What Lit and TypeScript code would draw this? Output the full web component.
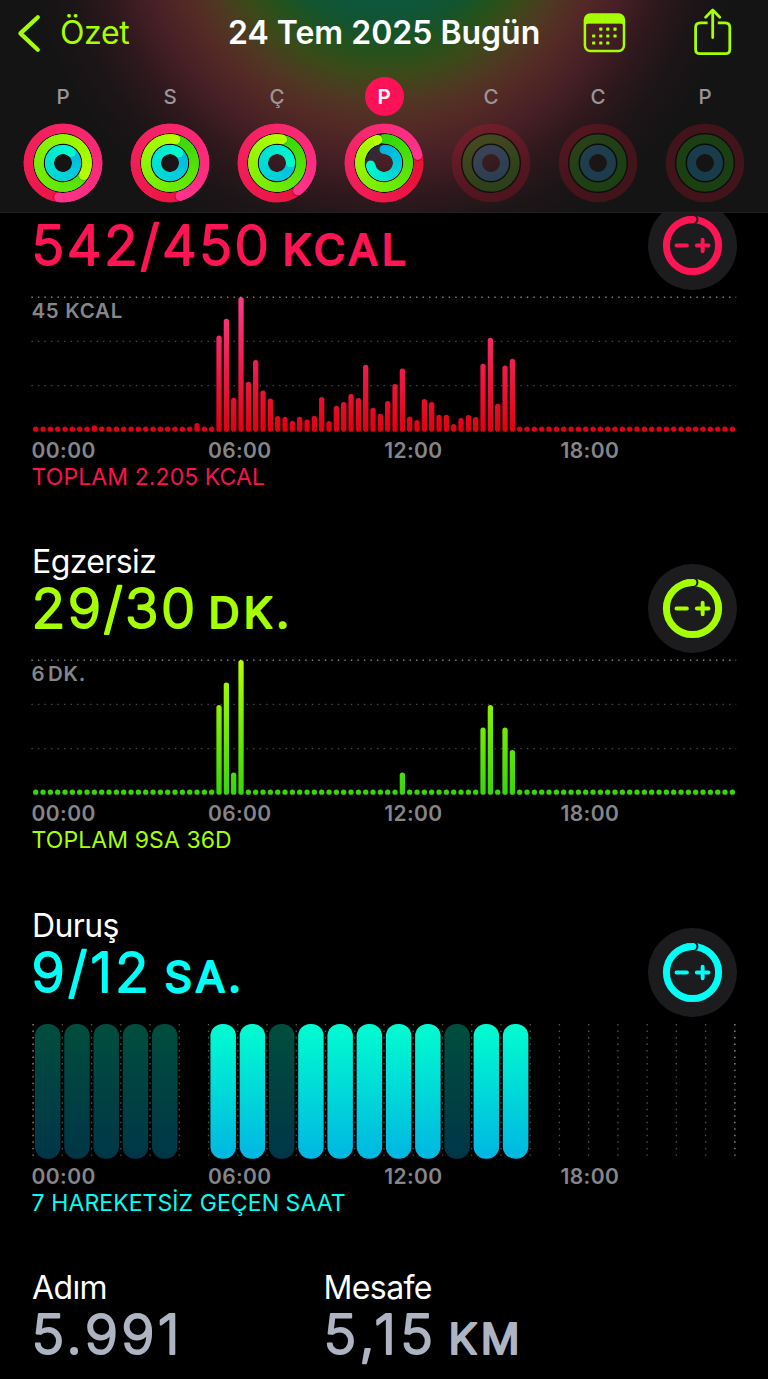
import { LitElement, html, svg, css } from "lit";
import { customElement, property } from "lit/decorators.js";

type RGB = [number, number, number];

const mix = (a: RGB, b: RGB, t: number) =>
  `rgb(${a.map((v, i) => Math.round(v + (b[i] - v) * t)).join(",")})`;

const polar = (r: number, deg: number): [number, number] => {
  const a = ((deg - 90) * Math.PI) / 180;
  return [40 + r * Math.cos(a), 40 + r * Math.sin(a)];
};

interface Day {
  letter: string;
  today?: boolean;
  rings?: [number, number, number];
}

const DAYS: Day[] = [
  { letter: "P", rings: [547, 481, 399] },
  { letter: "S", rings: [523, 374, 402] },
  { letter: "Ç", rings: [503, 373, 450] },
  { letter: "P", today: true, rings: [437, 345, 262] },
  { letter: "C" },
  { letter: "C" },
  { letter: "P" },
];

const RING_STYLE: { r: number; w: number; from: RGB; to: RGB; track: string }[] = [
  { r: 34.6, w: 9.4, from: [226, 8, 32], to: [255, 50, 140], track: "rgba(235,20,50,.21)" },
  { r: 24.1, w: 9.4, from: [48, 216, 10], to: [180, 255, 0], track: "rgba(60,215,20,.22)" },
  { r: 13.5, w: 9, from: [0, 178, 226], to: [0, 250, 205], track: "rgba(40,170,220,.27)" },
];

const MOVE: Record<number, number> = {
  8: 6.5, 22: 8.7, 25: 96.3, 26: 113, 27: 34, 28: 134.7, 29: 50, 30: 71.7, 31: 41.3,
  32: 33.3, 33: 15.7, 34: 15, 35: 11, 36: 15, 37: 12.3, 38: 16, 39: 34.7, 40: 10.7,
  41: 26, 42: 29.7, 43: 37.7, 44: 33.7, 45: 67, 46: 24, 47: 18, 48: 30.7, 49: 47.7,
  50: 63.3, 51: 15.3, 52: 11.7, 53: 32.7, 54: 29.7, 55: 17, 56: 17, 57: 7.7, 58: 13.7,
  59: 16.7, 60: 14.7, 61: 68, 62: 94, 63: 28, 64: 66.3, 65: 73,
};

const EXERCISE: Record<number, number> = {
  25: 89.7, 26: 112.3, 27: 22.3, 28: 134.7, 50: 22.3, 61: 67.3, 62: 89.7, 64: 67.3, 65: 44.7,
};

/* One character per hour: d = idle, b = stood, . = no data */
const STAND = "ddddd.bbdbbbbbdbb.......";

@customElement("activity-rings")
class ActivityRings extends LitElement {
  @property({ attribute: false }) rings?: [number, number, number];

  static styles = css`
    :host { display: block; width: 80px; height: 80px; }
    svg { display: block; }
  `;

  private arc(i: number, total: number) {
    const s = RING_STYLE[i];
    const start = Math.max(0, total - 360);
    const steps = 60;
    const span = total - start;
    const segs = [];
    for (let k = 0; k < steps; k++) {
      const a = start + (span * k) / steps;
      const b = start + (span * (k + 1)) / steps + (k < steps - 1 ? 7 : 0);
      const [x1, y1] = polar(s.r, a);
      const [x2, y2] = polar(s.r, b);
      segs.push(svg`<path d="M${x1} ${y1}A${s.r} ${s.r} 0 0 1 ${x2} ${y2}" fill="none"
        stroke=${mix(s.from, s.to, a / total)} stroke-width=${s.w}></path>`);
    }
    const [hx, hy] = polar(s.r, total);
    const [sx, sy] = polar(s.r, total + 2.5);
    const [ox, oy] = polar(s.r, 0);
    return svg`
      ${total < 360 ? svg`<circle cx=${ox} cy=${oy} r=${s.w / 2} fill=${mix(s.from, s.to, 0)}></circle>` : ""}
      ${segs.slice(0, 30)}
      <circle cx=${sx} cy=${sy} r=${s.w / 2 - 0.3} fill="rgba(0,0,0,.22)"></circle>
      ${segs.slice(30)}
      <circle cx=${hx} cy=${hy} r=${s.w / 2} fill=${mix(s.from, s.to, 1)}></circle>`;
  }

  render() {
    return html`<svg width="80" height="80" viewBox="0 0 80 80">
      <circle cx="40" cy="40" r="29.3" fill="none" stroke="rgba(5,10,10,.75)" stroke-width="1.6"></circle>
      <circle cx="40" cy="40" r="18.7" fill="none" stroke="rgba(5,10,10,.75)" stroke-width="1.6"></circle>
      ${RING_STYLE.map((s, i) =>
        this.rings
          ? svg`${this.rings[i] < 360
              ? svg`<circle cx="40" cy="40" r=${s.r} fill="none" stroke="rgb(52,42,54)" stroke-width=${s.w}></circle>`
              : ""}${this.arc(i, this.rings[i])}`
          : svg`<circle cx="40" cy="40" r=${s.r} fill="none" stroke=${s.track} stroke-width=${s.w}></circle>`
      )}
    </svg>`;
  }
}

@customElement("goal-button")
class GoalButton extends LitElement {
  @property() color = "#fff";

  static styles = css`
    :host { display: block; width: 89px; height: 89px; border-radius: 50%; background: #1c1c1e; }
    svg { display: block; }
  `;

  render() {
    const c = this.color;
    return html`<svg width="89" height="89" viewBox="-44.5 -44.5 89 89" fill="none">
      <circle r="26.1" stroke=${c} stroke-width="7"></circle>
      <circle cx="1" cy="-26.1" r="4.9" fill="#1c1c1e"></circle>
      <path d="M-8 -24.85A26.1 26.1 0 0 1 .4 -26.1" stroke=${c} stroke-width="7" stroke-linecap="round"></path>
      <path d="M-16 0H-5.6M4.3 0H16M10.15 -5.8V5.8" stroke=${c} stroke-width="3.9" stroke-linecap="round"></path>
    </svg>`;
  }
}

@customElement("metric-value")
class MetricValue extends LitElement {
  @property() amount = "";
  @property() unit = "";
  @property() color = "#fff";
  @property({ type: Number }) amountWidth = 0;
  @property({ type: Number }) unitX = 0;
  @property({ type: Number }) unitWidth = 0;

  static styles = css`
    :host { display: block; height: 64px; }
    svg { display: block; overflow: visible; }
    text { font-family: Inter, "Liberation Sans", sans-serif; stroke-linejoin: round; stroke-linecap: round; }
    .amount { font-size: 55.4px; font-weight: 350; stroke-width: 2.1px; }
    .unit { font-size: 43px; font-weight: 400; stroke-width: 2.1px; }
  `;

  render() {
    return html`<svg width="400" height="64" fill=${this.color} stroke=${this.color}>
      <text class="amount" x="-0.4" y="43" textLength=${this.amountWidth}>${this.amount}</text>
      ${this.unit
        ? svg`<text class="unit" x=${this.unitX} y="43" textLength=${this.unitWidth}>${this.unit}</text>`
        : ""}
    </svg>`;
  }
}

@customElement("app-root")
class AppRoot extends LitElement {
  static styles = css`
    :host {
      display: flex;
      flex-direction: column;
      width: 768px;
      height: 1379px;
      overflow: hidden;
      background: #000;
      color: #fff;
      font-family: Inter, "Liberation Sans", sans-serif;
      white-space: nowrap;
    }
    svg { display: block; }
    .header {
      position: relative;
      z-index: 1;
      flex: none;
      box-sizing: border-box;
      height: 213px;
      border-bottom: 1px solid #222022;
      background: radial-gradient(circle at 384px -90px,
        #0c5640 88px, #12542f 118px, #24521c 140px, #3c4a19 164px,
        #503723 192px, #542a25 217px, #472026 250px, #2e181d 288px, #1c1517 325px, #141414 365px);
    }
    .bar { display: grid; grid-template-columns: 228px 355px 111px 1fr; height: 66px; align-items: center; }
    .back { display: flex; align-items: center; padding-left: 17px; gap: 19px; color: #a6ff00; }
    .back-label { font-size: 32px; line-height: 40px; letter-spacing: -0.35px; }
    .title { font-size: 32px; line-height: 40px; font-weight: 600; letter-spacing: 0; }
    .days { display: grid; grid-template-columns: repeat(7, 107px); padding-left: 9.5px; }
    .day { display: flex; flex-direction: column; align-items: center; padding-top: 11px; gap: 7px; }
    .letter {
      width: 39px; height: 39px; border-radius: 50%; text-align: center;
      font-size: 20.5px; line-height: 40px; font-weight: 500; color: #9b9598;
    }
    .letter.today { background: #ff1157; color: #fff; font-weight: 600; }
    .content { flex: 1; padding: 0 32px; display: flex; flex-direction: column; gap: 50.5px; }
    .head { display: flex; justify-content: space-between; align-items: flex-end; height: 119.3px; }
    .head.cut { height: 84px; }
    .head goal-button { margin: 0 -0.5px 7px 0; }
    .names { display: flex; flex-direction: column; gap: 4.8px; padding-bottom: 11.1px; }
    .name { font-size: 32px; line-height: 36px; letter-spacing: -0.6px; }
    .plot { position: relative; height: 135px; }
    .plot svg { overflow: visible; }
    .scale { position: absolute; left: -0.6px; top: 1px; font-size: 20.5px; line-height: 26px; font-weight: 600; color: #85858a; letter-spacing: .75px; }
    .scale.tight { word-spacing: -3.2px; }
    .hours {
      display: grid; grid-template-columns: repeat(4, 176.3px); margin-top: 5.5px; margin-left: -0.4px;
      font-size: 21px; line-height: 26px; font-weight: 600; color: #85858a; letter-spacing: .4px;
    }
    .total { font-size: 23px; line-height: 27px; letter-spacing: .08px; margin-left: -0.4px; }
    .stats { display: grid; grid-template-columns: 291.5px 1fr; margin-top: 2.2px; }
    .stat { display: flex; flex-direction: column; gap: 5.2px; }
    .move { color: #fa114f; }
    .exercise { color: #a6ff00; }
    .stand { color: #00fff0; }
  `;

  private hours() {
    return html`<div class="hours">
      ${["00:00", "06:00", "12:00", "18:00"].map((h) => html`<span>${h}</span>`)}
    </div>`;
  }

  private bars(id: string, data: Record<number, number>, top: string, bottom: string) {
    const pitch = 704 / 96;
    return svg`<svg width="704" height="135">
      <defs><linearGradient id=${id} gradientUnits="userSpaceOnUse" x1="0" y1="0" x2="0" y2="135">
        <stop offset="0" stop-color=${top}></stop><stop offset="1" stop-color=${bottom}></stop>
      </linearGradient></defs>
      ${[0.3, 44.4, 88.6].map((y, i) => svg`<line x1="-.6" x2="704.2" y1=${y} y2=${y}
        stroke=${i ? "#484848" : "#808080"} stroke-width="1.4" stroke-dasharray="1.4 5.12"></line>`)}
      ${Array.from({ length: 96 }, (_, i) => {
        const h = data[i] ?? 5.3;
        return svg`<rect x=${i * pitch + 1.05} y=${134.8 - h} width="5.3" height=${h} rx="2.6" fill="url(#${id})"></rect>`;
      })}
    </svg>`;
  }

  private standPlot() {
    const pitch = 29.24;
    return svg`<svg width="704" height="135">
      <defs>
        <linearGradient id="on" x1="0" y1="0" x2="0" y2="1">
          <stop offset="0" stop-color="#00fdd0"></stop><stop offset="1" stop-color="#00b6e2"></stop>
        </linearGradient>
        <linearGradient id="off" x1="0" y1="0" x2="0" y2="1">
          <stop offset="0" stop-color="#004e3d"></stop><stop offset="1" stop-color="#003648"></stop>
        </linearGradient>
      </defs>
      ${Array.from({ length: 25 }, (_, i) => svg`<line x1=${1.1 + i * pitch} x2=${1.1 + i * pitch} y1="0" y2="134"
        stroke=${i % 24 ? "#555" : "#999"} stroke-width="1.3" stroke-dasharray="1.4 5.12"></line>`)}
      ${[...STAND].map((s, i) =>
        s === "." ? "" : svg`<rect x=${3 + i * pitch} y="0" width="25.5" height="134.7" rx="12"
          fill=${s === "b" ? "url(#on)" : "url(#off)"}></rect>`)}
    </svg>`;
  }

  render() {
    return html`
      <header class="header">
        <div class="bar">
          <div class="back">
            <svg width="24" height="40" viewBox="17 12 24 40" fill="none">
              <path d="M37.8 16.2L20.4 32.4L37.8 48.8" stroke="#a6ff00" stroke-width="4.2" stroke-linecap="round" stroke-linejoin="round"></path>
            </svg>
            <span class="back-label">Özet</span>
          </div>
          <div class="title">24 Tem 2025 Bugün</div>
          <svg width="44" height="42" viewBox="583 11.6 44 42" fill="none">
            <rect x="584.9" y="14.2" width="39.1" height="36.4" rx="5.4" stroke="#a6ff00" stroke-width="2.5"></rect>
            <path d="M584.9 22.8V19Q584.9 14.2 590 14.2H619Q624 14.2 624 19V22.8Z" fill="#a6ff00"></path>
            <path d="M584.9 26Q584.9 22.4 588.5 22.4H620.4Q624 22.4 624 26" stroke="#a6ff00" stroke-width="1.4"></path>
            ${[[600.8, 28.7], [607.8, 28.7], [615, 28.7], [593.7, 35.6], [600.8, 35.6], [607.8, 35.6], [615, 35.6], [593.7, 42.6], [600.8, 42.6], [607.8, 42.6]].map(
              ([x, y]) => svg`<rect x=${x - 1.6} y=${y - 1.6} width="3.2" height="3.2" rx=".7" fill="#a6ff00"></rect>`
            )}
          </svg>
          <svg width="38" height="50" viewBox="694 7.6 38 50" fill="none" stroke="#a6ff00" stroke-width="2.8" stroke-linecap="round" stroke-linejoin="round">
            <path d="M707.6 22.4H700.2Q695.6 22.4 695.6 27V49Q695.6 53.3 700.2 53.3H725.2Q729.8 53.3 729.8 49V27Q729.8 22.4 725.2 22.4H717.8" stroke-linecap="butt"></path>
            <path d="M712.7 37.2V10M705.6 16.8L712.7 9.7L719.8 16.8"></path>
          </svg>
        </div>
        <div class="days">
          ${DAYS.map((d) => html`<div class="day">
            <div class="letter ${d.today ? "today" : ""}">${d.letter}</div>
            <activity-rings .rings=${d.rings}></activity-rings>
          </div>`)}
        </div>
      </header>
      <main class="content">
        <section>
          <div class="head cut">
            <div class="names">
              <metric-value amount="542/450" unit="KCAL" color="#ff1553" .amountWidth=${237} .unitX=${250.5} .unitWidth=${123.5}></metric-value>
            </div>
            <goal-button color="#ff1553"></goal-button>
          </div>
          <div class="plot">${this.bars("mv", MOVE, "#ff3a8c", "#e1000f")}<span class="scale">45 KCAL</span></div>
          ${this.hours()}
          <div class="total move">TOPLAM 2.205 KCAL</div>
        </section>
        <section>
          <div class="head">
            <div class="names">
              <div class="name">Egzersiz</div>
              <metric-value amount="29/30" unit="DK." color="#a6ff00" .amountWidth=${163.5} .unitX=${176.5} .unitWidth=${80.5}></metric-value>
            </div>
            <goal-button color="#a6ff00"></goal-button>
          </div>
          <div class="plot">${this.bars("ex", EXERCISE, "#b4ff00", "#35d60c")}<span class="scale tight">6 DK.</span></div>
          ${this.hours()}
          <div class="total exercise">TOPLAM 9SA 36D</div>
        </section>
        <section>
          <div class="head">
            <div class="names">
              <div class="name">Duruş</div>
              <metric-value amount="9/12" unit="SA." color="#00fff6" .amountWidth=${117.5} .unitX=${132.5} .unitWidth=${76.5}></metric-value>
            </div>
            <goal-button color="#00fff6"></goal-button>
          </div>
          <div class="plot">${this.standPlot()}</div>
          ${this.hours()}
          <div class="total stand">7 HAREKETSİZ GEÇEN SAAT</div>
        </section>
        <section class="stats">
          <div class="stat">
            <div class="name">Adım</div>
            <metric-value amount="5.991" color="#aeb4c2" .amountWidth=${148}></metric-value>
          </div>
          <div class="stat">
            <div class="name">Mesafe</div>
            <metric-value amount="5,15" unit="KM" color="#aeb4c2" .amountWidth=${109.5} .unitX=${124.5} .unitWidth=${71}></metric-value>
          </div>
        </section>
      </main>
    `;
  }
}
